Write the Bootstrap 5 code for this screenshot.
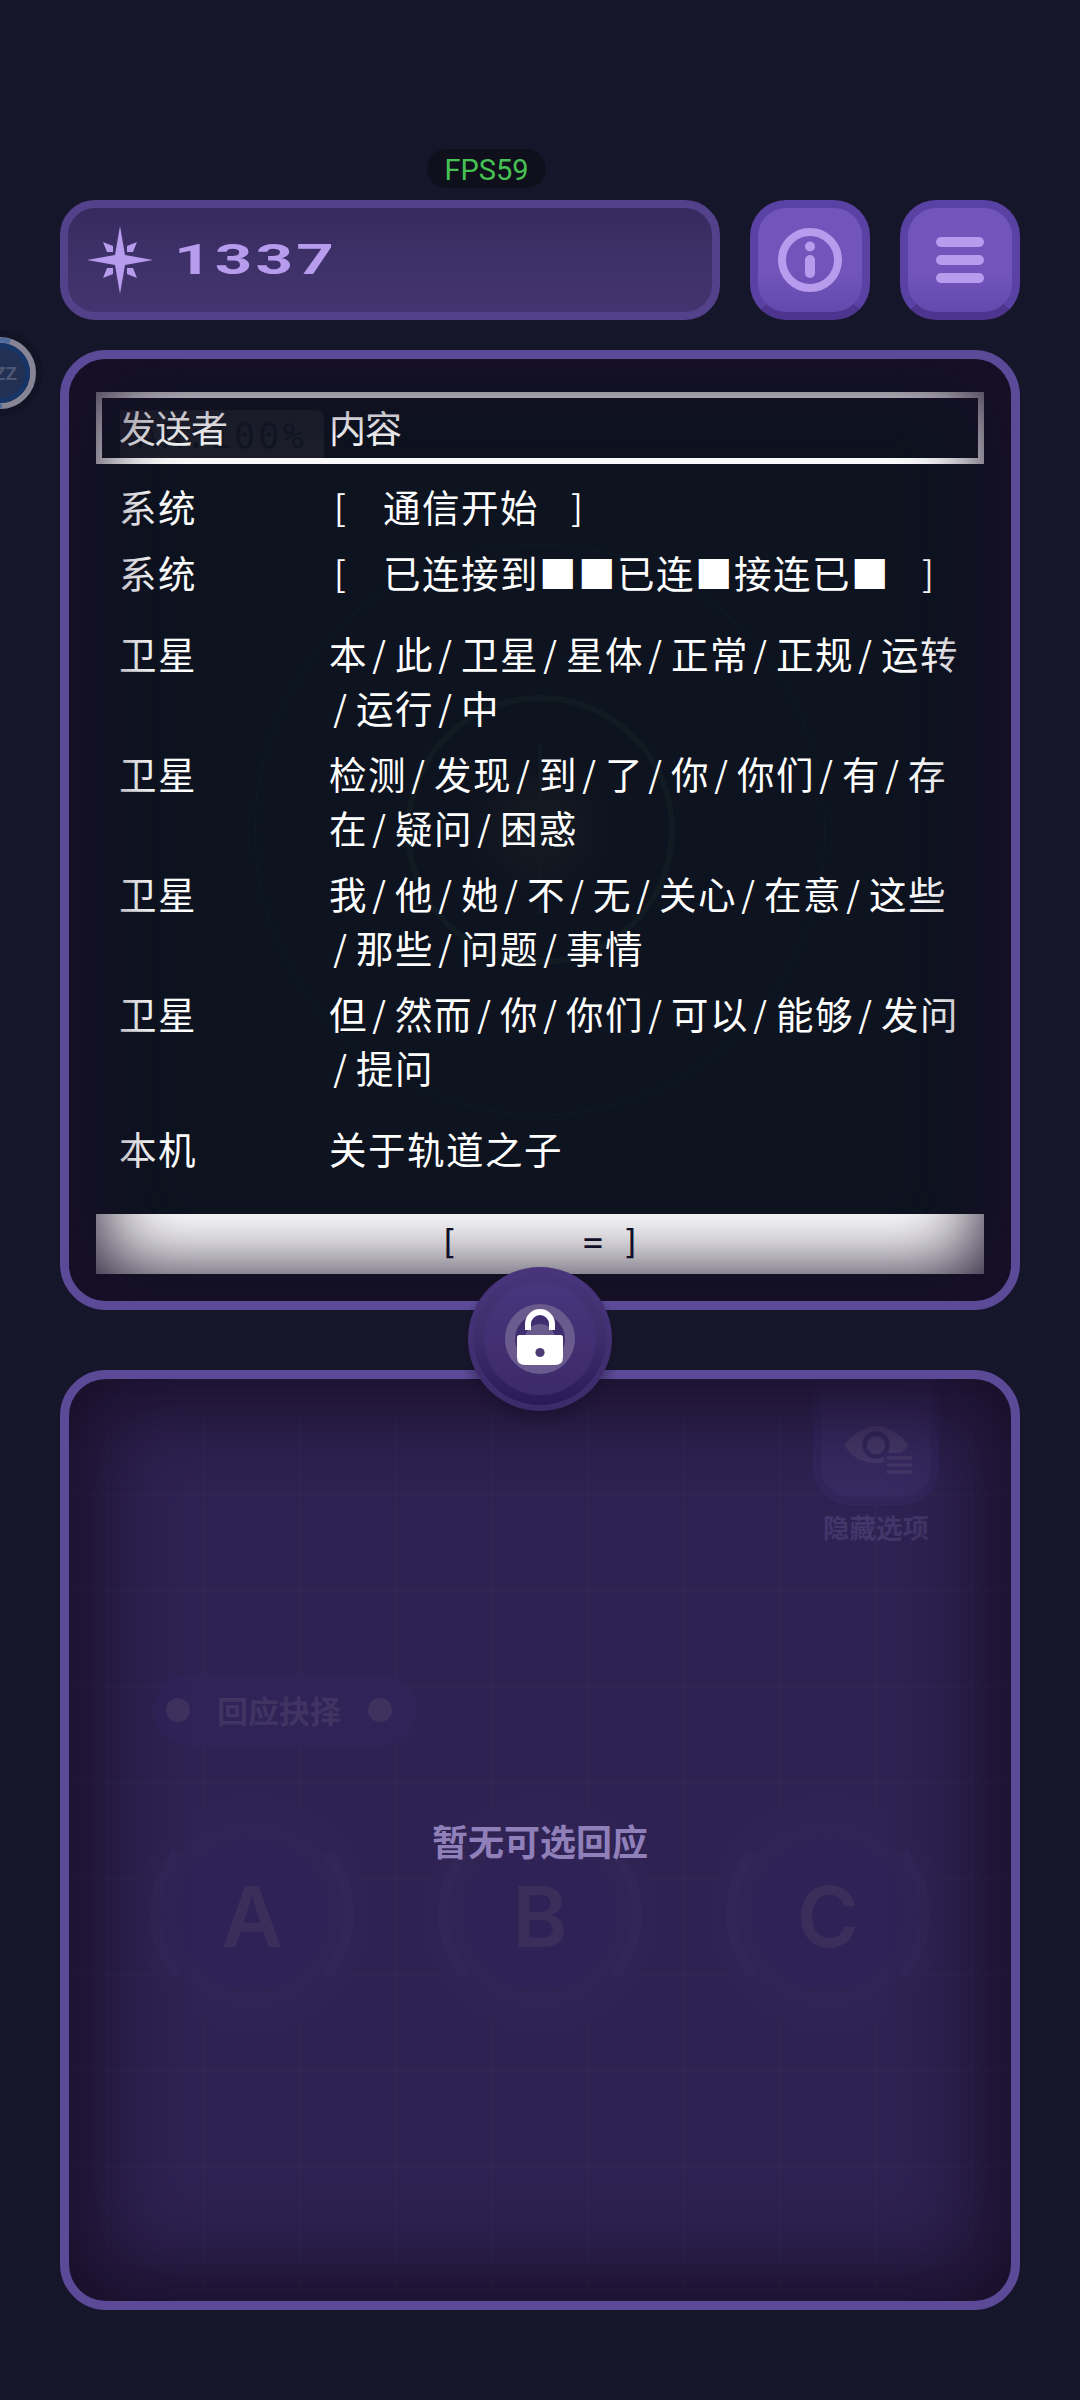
<!DOCTYPE html>
<html lang="zh-CN">
<head>
<meta charset="utf-8">
<meta name="viewport" content="width=device-width, initial-scale=1">
<title>1337</title>
<link href="https://cdn.jsdelivr.net/npm/bootstrap@5.3.0/dist/css/bootstrap.min.css" rel="stylesheet">
<style>
  body { background: #16162b; font-family: "Noto Sans CJK SC", "Noto Sans", sans-serif; overflow: hidden; }
  .screen { width: 1080px; height: 2400px; padding: 0 60px; }
  .top-space { height: 200px; padding: 149px 59px 0 367px; }
  .fps { width: 119px; height: 39px; background: #10101c; color: #46c254; font: 29px/42px Roboto, sans-serif; }
  .bar { height: 120px; gap: 30px; }
  .score { width: 660px; border: 8px solid #54418c; border-radius: 35px; background: linear-gradient(#352b5e, #3d3068 45%, #44346f); padding-left: 18px; }
  .digits { font: 700 42px/42px Roboto, sans-serif; color: #b79ced; transform: scaleX(1.56); transform-origin: 0 50%; letter-spacing: 2px; margin-left: 20px; }
  .key { width: 120px; height: 120px; border: 8px solid #5a41a4; border-bottom-color: #4d358f; border-radius: 36px; background: #7155bb linear-gradient(#7155bb 60%, #6349ad); }
  .panel { position: relative; border: 9px solid #5b4a97; border-radius: 46px; overflow: hidden; }
  .panel::after { content: ""; position: absolute; inset: 0; border-radius: 37px; pointer-events: none; }
  .comm { height: 960px; margin-top: 30px; padding: 33px 27px 27px; background: #0d131f; }
  .comm::after { box-shadow: inset 0 0 80px 27px #190f29; }
  .reply { height: 940px; margin-top: 60px; background-color: #2e2252;
    background-image: repeating-linear-gradient(90deg, #33275588 0 3px, transparent 3px 96px), repeating-linear-gradient(#33275588 0 4px, transparent 4px 96px);
    background-position: 37px 0, 0 17px; background-origin: padding-box; }
  .reply::after { box-shadow: inset 0 0 80px 30px #190f29; }
  .radar { position: absolute; left: 0; top: 0; width: 942px; height: 942px; }
  .head-row { position: relative; height: 72px; border: 6px solid #fff; padding-left: 17px; font-size: 37px; line-height: 58px; letter-spacing: -1px; color: #fff; }
  .ghost-tab { position: absolute; left: 18px; top: 12px; width: 204px; height: 48px; background: #1c1f2a; border-top-right-radius: 8px; color: #101623; font: 35px/52px "DejaVu Sans Mono", monospace; letter-spacing: 3.2px; padding-left: 17px; }
  .col-name { width: 210px; flex: none; position: relative; }
  .log { position: relative; padding: 15px 0 0 23px; height: 750px; color: #fff; font-size: 37.5px; line-height: 54px; letter-spacing: 1.5px; white-space: nowrap; }
  .log .line { margin-bottom: 12px; }
  .log .brk { margin-bottom: 27px; }
  .log i { display: inline-block; width: 27px; height: 54px; padding-right: 5px; text-align: center; font-style: normal; font-size: 35px; letter-spacing: 0; line-height: 54px; vertical-align: top; }
  .foot { height: 60px; background: #fff; color: #11122a; font: 33px/58px "DejaVu Sans Mono", monospace; }
  .foot span { width: 24px; text-align: center; }
  .lock { position: absolute; left: 450px; top: 1249px; width: 180px; height: 180px; }
  .bubble { position: absolute; left: -50px; top: 320px; width: 100px; height: 106px; }
  .hide-opt { position: absolute; left: 744px; top: -9px; width: 126px; height: 135px; border: 8px solid #32265c; border-top: 0; border-radius: 0 0 36px 36px; background: #372a62; }
  .hide-label { position: absolute; left: 744px; top: 130px; width: 126px; text-align: center; font-size: 26.5px; line-height: 36px; font-weight: 700; color: #43366a; }
  .pill { position: absolute; left: 84px; top: 295px; width: 264px; height: 72px; background: #302358; color: #413463; font-weight: 700; font-size: 31px; padding: 0 25px 0 13px; }
  .pill b { width: 24px; height: 24px; background: #3f325f; border-radius: 50%; }
  .empty { position: absolute; left: 0; right: 0; top: 434px; text-align: center; color: #8f80b9; font-weight: 700; font-size: 36px; line-height: 54px; }
  .choices { position: absolute; left: 0; top: 379px; width: 942px; height: 320px; }
  .choices text { font: 600 84px Inter, sans-serif; fill: #3b2e5b; text-anchor: middle; }
</style>
<script src="https://cdn.jsdelivr.net/npm/bootstrap@5.3.0/dist/js/bootstrap.bundle.min.js"></script>
</head>
<body>
<div class="screen position-relative overflow-hidden">
  <div class="top-space"><div class="fps rounded-pill text-center">FPS59</div></div>

  <header class="bar d-flex">
    <div class="score d-flex align-items-center">
      <svg width="68" height="68" viewBox="-34 -34 68 68" fill="#b79ced"><path d="M0-34 5-5 33 0 5 5 0 34-5 5-33 0-5-5Z"/><path d="M-17-18-7-14-7-8-13-8ZM17-18 7-14 7-8 13-8ZM-17 18-7 14-7 8-13 8ZM17 18 7 14 7 8 13 8Z"/></svg>
      <div class="digits">1337</div>
    </div>
    <button class="key btn p-0 d-flex align-items-center justify-content-center" aria-label="info">
      <svg width="66" height="66" viewBox="-33 -33 66 66"><circle r="28" fill="none" stroke="#b79ced" stroke-width="8"/><circle cy="-13.5" r="5" fill="#b79ced"/><rect x="-5" y="-5" width="10" height="23" rx="5" fill="#b79ced"/></svg>
    </button>
    <button class="key btn p-0 d-flex align-items-center justify-content-center" aria-label="menu">
      <svg width="48" height="46" fill="#b79ced"><rect width="48" height="10" rx="5"/><rect y="18" width="48" height="10" rx="5"/><rect y="36" width="48" height="10" rx="5"/></svg>
    </button>
  </header>

  <section class="panel comm">
    <svg class="radar" viewBox="0 0 942 942" fill="none" stroke="#121a22">
      <defs><radialGradient id="glow"><stop offset="0" stop-color="#171b22"/><stop offset="1" stop-color="#0d131f"/></radialGradient></defs>
      <circle cx="471" cy="471" r="75" fill="url(#glow)" stroke="none"/>
      <circle cx="471" cy="471" r="132" stroke-width="6"/>
      <circle cx="471" cy="471" r="285" stroke-width="3" stroke="#0e1620"/>
      <path d="M471 385V555" stroke-width="3"/>
    </svg>
    <div class="head-row d-flex">
      <div class="ghost-tab">AR:100%</div>
      <div class="col-name">发送者</div><div class="position-relative">内容</div>
    </div>
    <div class="log">
      <div class="line d-flex"><div class="col-name">系统</div><div><i>[</i><i></i>通信开始<i></i><i>]</i></div></div>
      <div class="line brk d-flex"><div class="col-name">系统</div><div><i>[</i><i></i>已连接到■■已连■接连已■<i></i><i>]</i></div></div>
      <div class="line d-flex"><div class="col-name">卫星</div><div>本<i>/</i>此<i>/</i>卫星<i>/</i>星体<i>/</i>正常<i>/</i>正规<i>/</i>运转<br><i>/</i>运行<i>/</i>中</div></div>
      <div class="line d-flex"><div class="col-name">卫星</div><div>检测<i>/</i>发现<i>/</i>到<i>/</i>了<i>/</i>你<i>/</i>你们<i>/</i>有<i>/</i>存<br>在<i>/</i>疑问<i>/</i>困惑</div></div>
      <div class="line d-flex"><div class="col-name">卫星</div><div>我<i>/</i>他<i>/</i>她<i>/</i>不<i>/</i>无<i>/</i>关心<i>/</i>在意<i>/</i>这些<br><i>/</i>那些<i>/</i>问题<i>/</i>事情</div></div>
      <div class="line brk d-flex"><div class="col-name">卫星</div><div>但<i>/</i>然而<i>/</i>你<i>/</i>你们<i>/</i>可以<i>/</i>能够<i>/</i>发问<br><i>/</i>提问</div></div>
      <div class="line d-flex"><div class="col-name">本机</div><div>关于轨道之子</div></div>
    </div>
    <div class="foot position-relative d-flex justify-content-center"><span>[</span><span style="margin-left:120px">=</span><span style="margin-left:14px">]</span></div>
  </section>

  <section class="panel reply">
    <div class="hide-opt d-flex align-items-end justify-content-center">
      <svg width="70" height="52" viewBox="0 0 70 52" style="margin:0 0 20px 6px"><path d="M0 20Q32-18 65 20 60 28 44 33L38 38Q12 40 0 20Z" fill="#46396a"/><circle cx="32" cy="20" r="11.5" fill="#46396a" stroke="#33275c" stroke-width="4.5"/><path d="M40 28H70V52H40Z" fill="#372a62"/><path d="M43 33H68M43 40H68M43 47H68" stroke="#46396a" stroke-width="3.6"/></svg>
    </div>
    <div class="hide-label">隐藏选项</div>
    <div class="pill rounded-pill d-flex align-items-center justify-content-between"><b></b><span>回应抉择</span><b></b></div>
    <svg class="choices" viewBox="0 0 942 320">
      <g transform="translate(183 156)"><circle r="118" fill="#2f2353"/><circle r="94" fill="#302455"/><circle r="76" fill="#2f2256"/><path d="M-75-61A97 97 0 0 0-75 61M75-61A97 97 0 0 1 75 61" fill="none" stroke="#322657" stroke-width="11"/><text y="33">A</text></g>
      <g transform="translate(471 156)"><circle r="118" fill="#2f2353"/><circle r="94" fill="#302455"/><circle r="76" fill="#2f2256"/><path d="M-75-61A97 97 0 0 0-75 61M75-61A97 97 0 0 1 75 61" fill="none" stroke="#322657" stroke-width="11"/><text y="33">B</text></g>
      <g transform="translate(759 156)"><circle r="118" fill="#2f2353"/><circle r="94" fill="#302455"/><circle r="76" fill="#2f2256"/><path d="M-75-61A97 97 0 0 0-75 61M75-61A97 97 0 0 1 75 61" fill="none" stroke="#322657" stroke-width="11"/><text y="33">C</text></g>
    </svg>
    <div class="empty">暂无可选回应</div>
  </section>

  <svg class="lock" viewBox="-90 -90 180 180">
    <defs>
      <linearGradient id="lk" x2="0" y2="1"><stop offset="0" stop-color="#483479"/><stop offset=".5" stop-color="#3e2d6b"/><stop offset="1" stop-color="#2b1a58"/></linearGradient>
      <linearGradient id="rim" x2="0" y2="1"><stop offset="0" stop-color="#49357c"/><stop offset="1" stop-color="#3d2a6a"/></linearGradient>
      <radialGradient id="sh"><stop offset=".7" stop-color="#120c24" stop-opacity=".5"/><stop offset="1" stop-color="#120c24" stop-opacity="0"/></radialGradient>
    </defs>
    <circle cy="8" r="82" fill="url(#sh)"/>
    <circle r="72" fill="url(#rim)"/><circle r="66" fill="url(#lk)"/>
    <circle r="56" fill="url(#rim)"/>
    <circle r="30" fill="#402e70" stroke="#6a5a8d" stroke-width="10"/><circle r="15" fill="#6a5a8d"/>
    <path d="M-12-9V-15A12 12 0 0 1 12-15V-9" fill="none" stroke="#fff" stroke-width="6"/>
    <path d="M-20.500-4H20.500Q23-4 23-1.500V18Q23 26 15 26H-15Q-23 26-23 18V-1.500Q-23-4-20.500-4Z" fill="#fff"/><circle cy="13.500" r="4.600" fill="#4b3b74"/>
  </svg>

  <svg class="bubble" viewBox="-50 -53 100 106">
    <circle r="43" fill="#131326"/>
    <circle r="33" fill="#223054" stroke="#878595" stroke-width="6"/><circle r="27.500" fill="none" stroke="#173466" stroke-width="5"/>
    <path d="M0-33A33 33 0 0 1 10-31.500M-6 33H2" stroke="#4d6c9d" stroke-width="5" fill="none"/>
    <text x="17" y="7" text-anchor="end" font-family="Roboto" font-weight="700" font-size="19" fill="#4d5772">ZZ</text>
  </svg>
</div>
</body>
</html>
